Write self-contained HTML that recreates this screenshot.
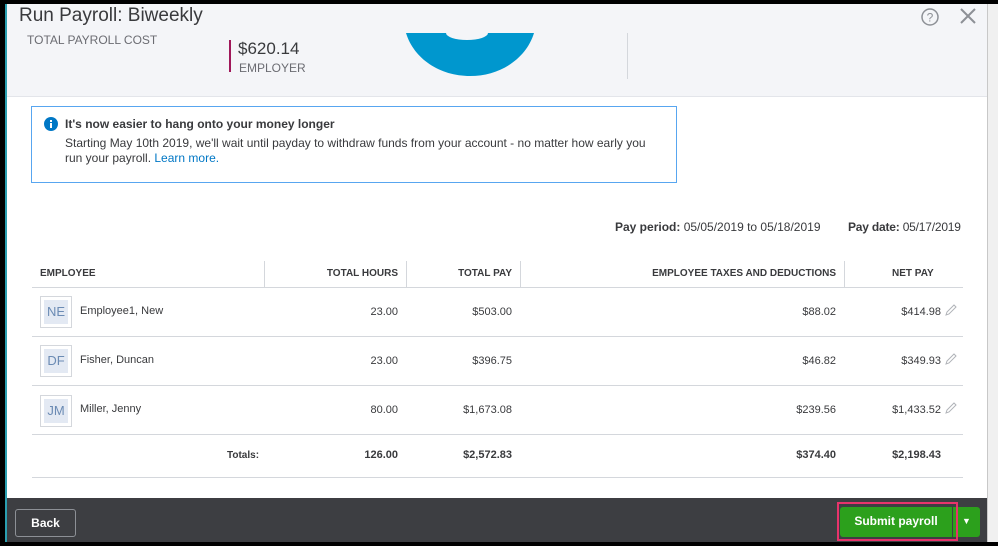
<!DOCTYPE html>
<html><head><style>
*{margin:0;padding:0;box-sizing:border-box}
body{width:998px;height:546px;background:#000;position:relative;overflow:hidden;font-family:"Liberation Sans",sans-serif;color:#393a3d}
.a{position:absolute;white-space:nowrap}
.r{text-align:right}
.h{font-size:10px;font-weight:bold;color:#393a3d}
.c{font-size:11px;color:#393a3d}
.av{position:absolute;left:40px;width:32px;height:32px;border:1px solid #d4d7dc;background:#fff}
.av span{position:absolute;left:3px;top:3px;width:24px;height:24px;background:#e3e9f3;color:#6b8bb4;font-size:13px;text-align:center;line-height:24px}
.ln{position:absolute;left:32px;width:931px;height:1px;background:#d4d7dc}
.vl{position:absolute;top:261px;width:1px;height:26px;background:#d4d7dc}
.pen{position:absolute;width:12px;height:12px}
</style></head><body>
<div class="a" style="left:5px;top:4px;width:982px;height:538px;background:#fff"></div>
<div class="a" style="left:5px;top:4px;width:2px;height:538px;background:#2b9fb0"></div>
<div class="a" style="left:7px;top:4px;width:980px;height:93px;background:#f4f5f8;border-bottom:1px solid #e3e5ea"></div>
<div class="a" style="left:987px;top:4px;width:11px;height:538px;background:#f0f0f0;border-left:1px solid #c8c8c8"></div>
<div class="a" style="left:19px;top:5px;font-size:19px;color:#393a3d">Run Payroll: Biweekly</div>
<div class="a" style="left:27px;top:33px;font-size:12px;color:#6b6c72">TOTAL PAYROLL COST</div>
<div class="a" style="left:229px;top:40px;width:2px;height:32px;background:#a0185a"></div>
<div class="a" style="left:238px;top:39px;font-size:17px;color:#393a3d">$620.14</div>
<div class="a" style="left:239px;top:61px;font-size:12px;color:#6b6c72">EMPLOYER</div>
<svg class="a" style="left:406px;top:33px" width="130" height="46"><path d="M0,0 L40,0 A21,7 0 0 0 82,0 L128,0 C120,26 94,43 64,43 C34,43 8,26 0,0Z" fill="#0097ce"/></svg>
<div class="a" style="left:627px;top:33px;width:1px;height:46px;background:#d4d7dc"></div>
<svg class="a" style="left:920px;top:7px" width="20" height="20"><circle cx="10" cy="10" r="8" fill="none" stroke="#8d9096" stroke-width="1.5"/><text x="10" y="14.5" font-size="12" text-anchor="middle" fill="#8d9096" font-family="Liberation Sans">?</text></svg>
<svg class="a" style="left:959px;top:7px" width="18" height="18"><path d="M2,2L16,16M16,2L2,16" stroke="#8d9096" stroke-width="2"/></svg>
<div class="a" style="left:31px;top:106px;width:646px;height:77px;border:1px solid #58a6f0"></div>
<svg class="a" style="left:44px;top:117px" width="14" height="14"><circle cx="7" cy="7" r="7" fill="#0077c5"/><rect x="6" y="6" width="2" height="5" fill="#fff"/><rect x="6" y="3" width="2" height="2" fill="#fff"/></svg>
<div class="a" style="left:65px;top:117px;font-size:12px;font-weight:bold;color:#393a3d">It's now easier to hang onto your money longer</div>
<div class="a" style="left:65px;top:136px;font-size:12px;color:#393a3d">Starting May 10th 2019, we'll wait until payday to withdraw funds from your account - no matter how early you</div>
<div class="a" style="left:65px;top:151px;font-size:12px;color:#393a3d">run your payroll. <span style="color:#0077c5">Learn more.</span></div>
<div class="a" style="left:615px;top:220px;font-size:12px"><b>Pay period:</b> 05/05/2019 to 05/18/2019</div>
<div class="a" style="left:848px;top:220px;font-size:12px;letter-spacing:-0.2px"><b>Pay date:</b> 05/17/2019</div>
<div class="a h" style="left:40px;top:268px">EMPLOYEE</div>
<div class="vl" style="left:264px"></div>
<div class="a h r" style="left:270px;width:128px;top:268px">TOTAL HOURS</div>
<div class="vl" style="left:406px"></div>
<div class="a h r" style="left:410px;width:102px;top:268px">TOTAL PAY</div>
<div class="vl" style="left:520px"></div>
<div class="a h r" style="left:530px;width:306px;top:268px">EMPLOYEE TAXES AND DEDUCTIONS</div>
<div class="vl" style="left:844px"></div>
<div class="a h" style="left:892px;top:268px">NET PAY</div>
<div class="ln" style="top:287px"></div>
<div class="av" style="top:296px"><span>NE</span></div>
<div class="a c" style="left:80px;top:305px">Employee1, New</div>
<div class="a c r" style="left:300px;width:98px;top:306px">23.00</div>
<div class="a c r" style="left:410px;width:102px;top:306px">$503.00</div>
<div class="a c r" style="left:700px;width:136px;top:306px">$88.02</div>
<div class="a c r" style="left:850px;width:91px;top:306px">$414.98</div>
<div class="ln" style="top:336px"></div>
<div class="av" style="top:345px"><span>DF</span></div>
<div class="a c" style="left:80px;top:354px">Fisher, Duncan</div>
<div class="a c r" style="left:300px;width:98px;top:355px">23.00</div>
<div class="a c r" style="left:410px;width:102px;top:355px">$396.75</div>
<div class="a c r" style="left:700px;width:136px;top:355px">$46.82</div>
<div class="a c r" style="left:850px;width:91px;top:355px">$349.93</div>
<div class="ln" style="top:385px"></div>
<div class="av" style="top:395px"><span>JM</span></div>
<div class="a c" style="left:80px;top:403px">Miller, Jenny</div>
<div class="a c r" style="left:300px;width:98px;top:404px">80.00</div>
<div class="a c r" style="left:410px;width:102px;top:404px">$1,673.08</div>
<div class="a c r" style="left:700px;width:136px;top:404px">$239.56</div>
<div class="a c r" style="left:850px;width:91px;top:404px">$1,433.52</div>
<div class="ln" style="top:434px"></div>
<svg class="pen" style="left:945px;top:304px"><path d="M1,11L2,8L9,1L11,3L4,10Z" fill="none" stroke="#b0b3b8"/></svg>
<svg class="pen" style="left:945px;top:353px"><path d="M1,11L2,8L9,1L11,3L4,10Z" fill="none" stroke="#b0b3b8"/></svg>
<svg class="pen" style="left:945px;top:402px"><path d="M1,11L2,8L9,1L11,3L4,10Z" fill="none" stroke="#b0b3b8"/></svg>
<div class="a" style="left:227px;top:450px;font-size:10px;font-weight:bold">Totals:</div>
<div class="a c r" style="left:300px;width:98px;top:449px;font-weight:bold">126.00</div>
<div class="a c r" style="left:410px;width:102px;top:449px;font-weight:bold">$2,572.83</div>
<div class="a c r" style="left:700px;width:136px;top:449px;font-weight:bold">$374.40</div>
<div class="a c r" style="left:850px;width:91px;top:449px;font-weight:bold">$2,198.43</div>
<div class="ln" style="top:477px"></div>
<div class="a" style="left:7px;top:498px;width:980px;height:44px;background:#3d3e42"></div>
<div class="a" style="left:15px;top:509px;width:61px;height:28px;border:1px solid #8d9096;border-radius:3px;color:#fff;font-size:12px;font-weight:bold;text-align:center;line-height:26px">Back</div>
<div class="a" style="left:840px;top:507px;width:112px;height:30px;background:#2ca01c;border-radius:3px 0 0 3px;color:#fff;font-size:12px;font-weight:bold;text-align:center;line-height:29px">Submit payroll</div>
<div class="a" style="left:953px;top:507px;width:27px;height:30px;background:#2ca01c;border-radius:0 3px 3px 0;color:#fff;font-size:9px;text-align:center;line-height:29px">▼</div>
<div class="a" style="left:837px;top:502px;width:121px;height:39px;border:2px solid #e8336b"></div>
</body></html>
